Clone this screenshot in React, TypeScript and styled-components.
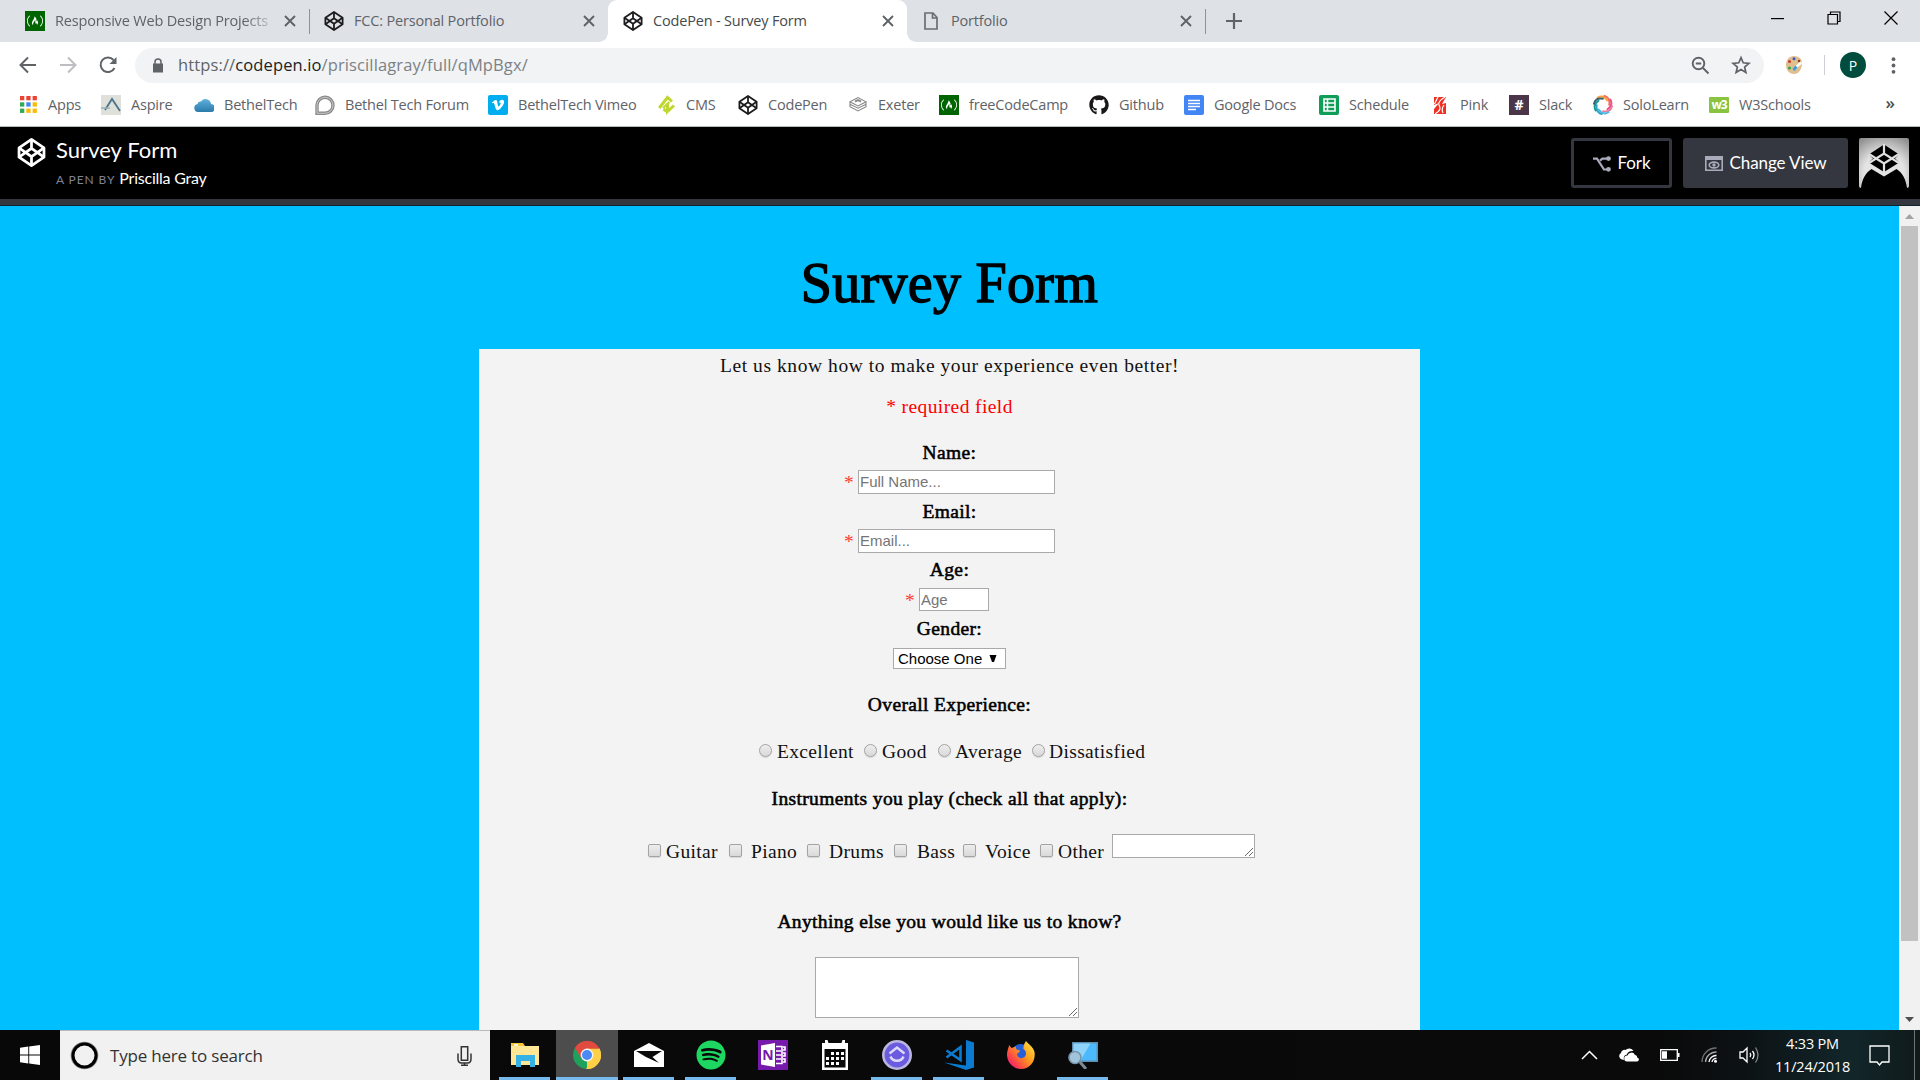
import React from "react";
import styled, { createGlobalStyle, css } from "styled-components";
import { FaGithub, FaSpotify, FaVimeoV } from "react-icons/fa";
import { SiFreecodecamp } from "react-icons/si";

const ui = '"Open Sans", "Noto Sans", sans-serif';
const serif = '"Liberation Serif", serif';
const lato = 'Lato, "Open Sans", sans-serif';
const arial = '"Liberation Sans", Arial, sans-serif';

const GlobalStyle = createGlobalStyle`
  html, body { margin: 0; padding: 0; overflow: hidden; }
  *, *::before, *::after { box-sizing: border-box; }
  svg { display: block; flex: none; }
`;

const Screen = styled.div`
  width: 1920px;
  height: 1080px;
  display: flex;
  flex-direction: column;
  overflow: hidden;
  background: #fff;
  font-family: ${ui};
`;

/* ---------- tab strip ---------- */

const TabStrip = styled.div`
  height: 42px;
  flex: none;
  display: flex;
  background: #dee1e6;
`;

const TabBox = styled.div<{ $width: number; $pad: number; $active?: boolean; $divider?: boolean }>`
  position: relative;
  width: ${(p) => p.$width}px;
  height: 42px;
  padding: 0 13px 0 ${(p) => p.$pad}px;
  display: flex;
  align-items: center;
  color: ${(p) => (p.$active ? "#45494d" : "#5f6368")};
  ${(p) =>
    p.$active &&
    css`
      background: #fff;
      border-radius: 9px 9px 0 0;
      &::before,
      &::after {
        content: "";
        position: absolute;
        bottom: 0;
        width: 9px;
        height: 9px;
      }
      &::before {
        left: -9px;
        background: radial-gradient(circle at 0 0, transparent 8.5px, #fff 9px);
      }
      &::after {
        right: -9px;
        background: radial-gradient(circle at 100% 0, transparent 8.5px, #fff 9px);
      }
    `}
  ${(p) =>
    p.$divider &&
    css`
      &::after {
        content: "";
        position: absolute;
        right: -1px;
        top: 9px;
        width: 1px;
        height: 25px;
        background: #8f9297;
      }
    `}
`;

const TabTitle = styled.span<{ $fade?: boolean }>`
  flex: 1;
  margin-left: 10px;
  margin-right: 14px;
  font-size: 14.5px;
  letter-spacing: -0.18px;
  line-height: 20px;
  padding-bottom: 1px;
  white-space: nowrap;
  overflow: hidden;
  ${(p) =>
    p.$fade &&
    css`
      -webkit-mask-image: linear-gradient(90deg, #000 88%, rgba(0, 0, 0, 0.25) 100%);
    `}
`;

const NewTab = styled.div`
  width: 58px;
  display: flex;
  align-items: center;
  justify-content: center;
`;

const WindowButtons = styled.div`
  margin-left: auto;
  margin-top: -6px;
  padding-right: 22px;
  display: flex;
  align-items: center;
  gap: 43px;
`;

/* ---------- address bar ---------- */

const Toolbar = styled.div`
  height: 45px;
  flex: none;
  display: flex;
  align-items: center;
  padding: 1px 0 0 18px;
`;

const NavButtons = styled.div`
  width: 117px;
  display: flex;
  gap: 20px;
`;

const AddressPill = styled.div`
  width: 1629px;
  height: 35px;
  border-radius: 18px;
  background: #f1f3f4;
  display: flex;
  align-items: center;
  padding: 0 13px 0 17px;
`;

const Url = styled.span`
  flex: 1;
  margin-left: 14px;
  padding-bottom: 1px;
  font-size: 16.5px;
  letter-spacing: 0.12px;
  line-height: 22px;
  color: #7d8185;
`;

const UrlScheme = styled.span`
  color: #5f6368;
`;
const UrlHost = styled.span`
  color: #202124;
`;

const PillActions = styled.div`
  display: flex;
  align-items: center;
  gap: 21px;
`;

const Extensions = styled.div`
  margin-left: 21px;
  display: flex;
  align-items: center;
`;

const Rule = styled.div`
  width: 1px;
  height: 20px;
  margin: 0 15px 0 21px;
  background: #cdd0d4;
`;

const Profile = styled.div`
  width: 26px;
  height: 26px;
  margin-right: 17px;
  border-radius: 50%;
  background: #004d40;
  color: #fff;
  display: flex;
  align-items: center;
  justify-content: center;
  font: 14px ${ui};
`;

/* ---------- bookmarks ---------- */

const BookmarkBar = styled.div`
  height: 40px;
  flex: none;
  display: flex;
  align-items: center;
  padding: 0 0 4px 18px;
  border-bottom: 1px solid #b6bcba;
`;

const BookmarkItem = styled.div<{ $width: number }>`
  width: ${(p) => p.$width}px;
  display: flex;
  align-items: center;
  gap: 10px;
  font-size: 14.5px;
  letter-spacing: -0.2px;
  line-height: 20px;
  white-space: nowrap;
  color: #5f6368;
`;

const IconSlot = styled.span`
  width: 20px;
  height: 20px;
  flex: none;
  display: flex;
  align-items: center;
  justify-content: center;
`;

const Tile = styled.span<{ $bg: string; $radius?: number }>`
  width: 20px;
  height: 20px;
  flex: none;
  border-radius: ${(p) => p.$radius ?? 0}px;
  background: ${(p) => p.$bg};
  color: #fff;
  display: flex;
  align-items: center;
  justify-content: center;
  font: bold 14px/20px ${ui};
  letter-spacing: 0;
`;

const MoreBookmarks = styled.span`
  margin-left: auto;
  margin-right: 25px;
  margin-top: -3px;
  font-size: 17px;
  font-weight: 600;
  line-height: 20px;
  color: #4a4d51;
`;

/* ---------- pen header ---------- */

const PenHeader = styled.header`
  height: 78px;
  flex: none;
  display: flex;
  margin-bottom: 1px;
  padding: 11px 11px 0 17px;
  background: #000;
  border-bottom: 6px solid #343740;
  box-shadow: 0 1px 0 #10242e;
  font-family: ${lato};
  color: #fff;
`;

const PenTitles = styled.div`
  flex: 1;
  margin: -1px 0 0 10px;
`;

const PenName = styled.h1`
  margin: 0;
  font-weight: 400;
  font-size: 22px;
  letter-spacing: 0.05px;
  line-height: 26px;
`;

const PenByline = styled.div`
  margin-top: 4px;
  font-size: 16px;
  line-height: 22px;
  letter-spacing: -0.23px;
`;

const ByLabel = styled.span`
  margin-right: 4px;
  font-size: 12px;
  letter-spacing: 0.9px;
  color: #7f8293;
`;

const HeaderButton = styled.button<{ $filled?: boolean; $width: number }>`
  width: ${(p) => p.$width}px;
  height: 50px;
  padding: 0 0 1px;
  display: flex;
  align-items: center;
  justify-content: center;
  gap: 7px;
  border: 3px solid #343740;
  border-radius: 3px;
  background: ${(p) => (p.$filled ? "#343740" : "#000")};
  color: #fff;
  font: 17px ${lato};
  letter-spacing: -0.1px;
  & > svg {
    margin-top: 2px;
  }
`;

const HeaderActions = styled.div`
  display: flex;
  gap: 11px;
`;

/* ---------- survey page ---------- */

const Viewport = styled.main`
  height: 824px;
  flex: none;
  display: flex;
  background: #00bfff;
`;

const Page = styled.div`
  width: 1899px;
  display: flex;
  flex-direction: column;
  align-items: center;
  font-family: ${serif};
  color: #000;
`;

const PageTitle = styled.h1`
  margin: 45px 0 0;
  height: 98px;
  font-weight: 400;
  font-size: 56px;
  letter-spacing: 0.3px;
  line-height: 64px;
  -webkit-text-stroke: 1.4px #000;
`;

const Card = styled.form`
  width: 941px;
  flex: 1;
  padding-top: 5px;
  background: #f3f3f3;
  display: flex;
  flex-direction: column;
  align-items: center;
`;

const Line = styled.p<{ $color?: string; $spacing?: number }>`
  margin: 0 0 17px;
  font-size: 19.5px;
  line-height: 24px;
  letter-spacing: ${(p) => p.$spacing ?? 0.4}px;
  color: ${(p) => p.$color ?? "#111"};
`;

const Heading = styled.h2<{ $top: number; $bottom: number }>`
  margin: ${(p) => p.$top}px 0 ${(p) => p.$bottom}px;
  font-weight: 400;
  font-size: 19.5px;
  line-height: 24px;
  letter-spacing: 0.36px;
  -webkit-text-stroke: 0.55px #000;
`;

const FieldRow = styled.div<{ $tail?: number }>`
  display: flex;
  padding-right: ${(p) => p.$tail ?? 0}px;
`;

const Star = styled.span`
  width: 14px;
  font-size: 19.5px;
  line-height: 25px;
  height: 23px;
  color: #ff3b30;
`;

const TextInput = styled.input<{ $width: number; $height: number }>`
  width: ${(p) => p.$width}px;
  height: ${(p) => p.$height}px;
  padding: 1px 1px 2px;
  border: 1px solid #a9a9a9;
  border-radius: 0;
  background: #fff;
  font: 15px ${arial};
  outline: none;
  &::placeholder {
    color: #757575;
  }
`;

const SelectBox = styled.div`
  width: 113px;
  height: 21px;
  padding: 0 8px 0 4px;
  display: flex;
  align-items: center;
  justify-content: space-between;
  border: 1px solid #a9a9a9;
  background: #fff;
  font: 15px/19px ${arial};
  white-space: nowrap;
`;

const OptionRow = styled.div<{ $left: number; $height: number }>`
  width: 100%;
  height: ${(p) => p.$height}px;
  padding-left: ${(p) => p.$left}px;
  display: flex;
  align-items: flex-end;
`;

const OptionBox = styled.label<{ $width: number; $gap: number }>`
  width: ${(p) => p.$width}px;
  display: flex;
  align-items: center;
  gap: ${(p) => p.$gap}px;
  font-size: 19.5px;
  line-height: 24px;
  letter-spacing: 0.35px;
  white-space: nowrap;
  color: #111;
`;

const Mark = styled.span<{ $round?: boolean }>`
  width: 13px;
  height: 13px;
  flex: none;
  margin-bottom: 3px;
  border: 1px solid #a3a3a3;
  border-radius: ${(p) => (p.$round ? "50%" : "2px")};
  background: linear-gradient(#ededed, #d9d9d9);
  box-shadow: 0 1px 1px rgba(0, 0, 0, 0.12);
`;

const AreaBox = styled.div<{ $width: number; $height: number }>`
  width: ${(p) => p.$width}px;
  height: ${(p) => p.$height}px;
  flex: none;
  align-self: flex-start;
  display: flex;
  align-items: flex-end;
  justify-content: flex-end;
  padding: 0 1px 1px 0;
  border: 1px solid #a9a9a9;
  background: #fff;
`;

const ScrollBar = styled.div`
  width: 21px;
  display: flex;
  flex-direction: column;
  align-items: center;
  background: #f1f1f1;
  padding: 8px 0;
`;

const Thumb = styled.div`
  width: 17px;
  height: 715px;
  margin: 7px 0 auto;
  background: #c1c1c1;
`;

/* ---------- taskbar ---------- */

const Taskbar = styled.footer`
  height: 50px;
  flex: none;
  display: flex;
  background: linear-gradient(90deg, #080808 0, #0a0a0a 1660px, #0c1113 1740px, #12262a 1850px, #101a1b 1920px);
  color: #fff;
`;

const Start = styled.div`
  width: 60px;
  display: flex;
  align-items: center;
  justify-content: center;
`;

const SearchBox = styled.div`
  width: 430px;
  margin-right: 4px;
  padding: 0 18px 0 10px;
  display: flex;
  align-items: center;
  background: #f1f1f1;
  border-top: 1px solid #b9b9b9;
`;

const SearchText = styled.span`
  flex: 1;
  margin-left: 11px;
  font-size: 17px;
  letter-spacing: -0.2px;
  color: #333;
`;

const AppCell = styled.div<{ $running?: boolean; $active?: boolean }>`
  position: relative;
  width: 62px;
  display: flex;
  align-items: center;
  justify-content: center;
  background: ${(p) => (p.$active ? "#4d4d4d" : "transparent")};
  &::after {
    content: "";
    display: ${(p) => (p.$running || p.$active ? "block" : "none")};
    position: absolute;
    bottom: 0;
    left: ${(p) => (p.$active ? 0 : 5)}px;
    right: ${(p) => (p.$active ? 0 : 6)}px;
    height: 3px;
    background: #76b9ed;
  }
`;

const Tray = styled.div`
  margin-left: auto;
  display: flex;
  align-items: center;
`;

const TrayIcons = styled.div`
  display: flex;
  align-items: center;
  gap: 21px;
`;

const Clock = styled.div`
  width: 101px;
  margin: 0 6px 0 2px;
  text-align: center;
  font-size: 14.5px;
  line-height: 23px;
  letter-spacing: -0.2px;
  padding-bottom: 1px;
`;

const ShowDesktop = styled.div`
  width: 6px;
  height: 50px;
  margin-left: 24px;
  border-left: 1px solid #6d7476;
`;

/* ---------- drawings ---------- */

const CodePenLogo = ({ size = 20, color = "#1c1c1e", stroke = 9 }: { size?: number; color?: string; stroke?: number }) => (
  <svg width={size} height={size} viewBox="0 0 100 100" fill="none" stroke={color} strokeWidth={stroke} strokeLinejoin="round">
    <path d="M50 5 93 34V66L50 95 7 66V34Z" />
    <path d="M50 5V36M50 64V95M7 34 50 64 93 34M7 66 50 36 93 66" />
  </svg>
);

const Cross = () => (
  <svg width="12" height="12" viewBox="0 0 12 12" stroke="#5f6368" strokeWidth="1.9">
    <path d="M1 1l10 10M11 1L1 11" />
  </svg>
);

const FreeCodeCamp = () => (
  <Tile $bg="#006400">
    <SiFreecodecamp size={16} />
  </Tile>
);

const PageGlyph = () => (
  <svg width="14" height="18" viewBox="0 0 14 18" fill="none" stroke="#6b6e73" strokeWidth="1.7">
    <path d="M1 1h8l4 4.500V17H1zM8.500 1v5H13" />
  </svg>
);

const AppsGlyph = () => {
  const colors = ["#ea4335", "#ea4335", "#ea4335", "#34a853", "#4285f4", "#fbbc05", "#34a853", "#fbbc05", "#fbbc05"];
  return (
    <svg width="17" height="17" viewBox="0 0 17 17">
      {colors.map((c, i) => (
        <rect key={i} x={(i % 3) * 6.3} y={Math.floor(i / 3) * 6.3} width="4.300" height="4.300" fill={c} />
      ))}
    </svg>
  );
};

const AspireGlyph = () => (
  <svg width="20" height="20" viewBox="0 0 20 20">
    <path fill="#dfe0da" d="M0 0h20v20H0z" />
    <path d="M4 15 11 4l8 12" fill="none" stroke="#49748f" strokeWidth="1.800" />
    <path d="M0 13h9" stroke="#9db0b8" strokeWidth="1.500" />
  </svg>
);

const BlueCloud = () => (
  <svg width="20" height="14" viewBox="0 0 20 14">
    <defs>
      <linearGradient id="cloudFill" x2="0" y2="1">
        <stop stopColor="#5fb0dc" />
        <stop offset="1" stopColor="#2b7bab" />
      </linearGradient>
    </defs>
    <path fill="url(#cloudFill)" d="M4 14a4 4 0 0 1-.5-7.900A3 3 0 0 1 7 3.500 5.500 5.500 0 0 1 17 6a4 4 0 0 1-.5 8z" />
  </svg>
);

const ForumGlyph = () => (
  <svg width="20" height="20" viewBox="0 0 20 20" fill="none">
    <path d="M2 18.300V10a8 8 0 1 1 8 8.300z" stroke="#8a8a8a" strokeWidth="3.400" />
    <path d="M2 18.300V10a8 8 0 1 1 8 8.300z" stroke="#cfcfcf" strokeWidth=".9" />
  </svg>
);

const CmsGlyph = () => (
  <svg width="17" height="20" viewBox="0 0 17 20" fill="none" stroke="#bfd730" strokeWidth="3">
    <path d="M1.200 13 9.500 2.500 14 6.500" />
    <path d="M11.500 7 5 13" strokeWidth="2.200" />
    <path d="M9.500 8.500v8l6.500-6M9.500 17l-4-3" />
  </svg>
);

const ExeterGlyph = () => (
  <svg width="18" height="15" viewBox="0 0 18 15" fill="none" stroke="#8b8b8b" strokeWidth="1.100">
    <path d="m1 4.800 8-4.200 8 4.200-8 4.200zM1 7.200l8 4 8-4M1 9.700l8 4.300 8-4.300M1 5v5M17 5v5" />
    <path d="m6 4.500 3-1.500 3 1.500" strokeWidth="2" />
  </svg>
);

const DocLines = () => (
  <svg width="12" height="12" viewBox="0 0 12 12" stroke="#fff" strokeWidth="1.500">
    <path d="M0 1.500h12M0 4.500h12M0 7.500h12M0 10.500h8" />
  </svg>
);

const SheetGlyph = () => (
  <svg width="13" height="14" viewBox="0 0 13 14" fill="none" stroke="#fff" strokeWidth="1.600">
    <path d="M1 1h11v12H1zM1 5h11M1 9h11M4.500 1v12" />
  </svg>
);

const PinkGlyph = () => (
  <svg width="14" height="20" viewBox="0 0 14 20">
    <path fill="#ee3124" d="M1 2h12L9 9l4-1v11H1v-5l5-6-5 2z" />
    <path d="M12 2C7 5 5 8 6 10s3 5-4 9M5 2 1.500 9M11 10q-3 4-1 8" stroke="#fff" strokeWidth="1.200" fill="none" />
  </svg>
);

const SoloLearnGlyph = () => {
  const colors = ["#f6a33b", "#f26f5a", "#ec4d87", "#f07a96", "#49b9e8", "#2aa7c9", "#149a8d", "#3c5f73"];
  return (
    <svg width="20" height="20" viewBox="-10 -10 20 20" fill="none" strokeWidth="1.900" strokeLinecap="round">
      {colors.map((c, i) => (
        <path key={c} d="M-5.500-7.300Q0-10.500 4.300-4.500" stroke={c} transform={`rotate(${i * 45})`} />
      ))}
    </svg>
  );
};

const W3Tile = styled(Tile)`
  height: 16px;
  font: bold 12px/14px ${ui};
  letter-spacing: -1px;
`;

const Palette = () => (
  <svg width="18" height="20" viewBox="0 0 18 20">
    <path fill="#e0bf8e" d="M9 1c5 0 8 3 8 7 0 6-3 11-8 11-5 0-8-4-8-9s3-9 8-9z" />
    <circle cx="9" cy="3.800" r="1.500" fill="#3f52c9" />
    <circle cx="4.500" cy="6.500" r="1.500" fill="#cf3a32" />
    <circle cx="4.500" cy="13" r="1.600" fill="#3aa648" />
    <circle cx="14" cy="6" r="1.300" fill="#8a3f22" />
    <path d="m16.500 7.500-6 5" stroke="#fff" strokeWidth="2.400" />
    <path d="m11.500 11.500-3 3.500" stroke="#3d9be0" strokeWidth="2.800" />
  </svg>
);

const ArrowGlyph = ({ color, flip }: { color: string; flip?: boolean }) => (
  <svg width="20" height="20" viewBox="0 0 20 20" fill="none" stroke={color} strokeWidth="2">
    <path d={flip ? "M2 10h15M10 2.500l7.500 7.500-7.500 7.500" : "M18 10H3M10 2.500 2.500 10l7.500 7.500"} />
  </svg>
);

const ReloadGlyph = () => (
  <svg width="20" height="20" viewBox="0 0 20 20">
    <path d="M16.500 13A7.300 7.300 0 1 1 15.500 5" fill="none" stroke="#5f6368" strokeWidth="2" />
    <path d="M18.500 2v7h-7z" fill="#5f6368" />
  </svg>
);

const LockGlyph = () => (
  <svg width="12" height="15" viewBox="0 0 12 15">
    <path fill="#5f6368" d="M1 5.500h10v9H1z" />
    <path d="M3 6V4a3 3 0 0 1 6 0v2" fill="none" stroke="#5f6368" strokeWidth="1.500" />
  </svg>
);

const ZoomOutGlyph = () => (
  <svg width="19" height="19" viewBox="0 0 19 19" fill="none" stroke="#5f6368" strokeWidth="1.900">
    <circle cx="7.500" cy="7.500" r="5.800" />
    <path d="m12 12 5.500 5.500M4.800 7.500h5.400" />
  </svg>
);

const StarGlyph = () => (
  <svg width="20" height="20" viewBox="0 0 20 20" fill="none" stroke="#5f6368" strokeWidth="1.700">
    <path d="m10 2.600 2.200 5.200 5.700.5-4.300 3.700 1.300 5.500L10 14.600l-4.900 2.900L6.400 12 2.100 8.300l5.700-.5z" />
  </svg>
);

const DotsGlyph = () => (
  <svg width="5" height="17" viewBox="0 0 5 17" fill="#5f6368">
    <circle cx="2.500" cy="2.200" r="1.900" />
    <circle cx="2.500" cy="8.500" r="1.900" />
    <circle cx="2.500" cy="14.800" r="1.900" />
  </svg>
);

const ForkGlyph = () => (
  <svg width="18" height="16" viewBox="0 0 18 16" fill="none" stroke="#a9abbb" strokeWidth="2.200">
    <path d="M0 2.600h4L11 13.500h4M7 4.500 9.500 2.600H15" />
    <circle cx="15.500" cy="2.600" r="1.300" fill="#a9abbb" />
    <circle cx="15.500" cy="13.300" r="1.300" fill="#a9abbb" />
  </svg>
);

const ViewGlyph = () => (
  <svg width="18" height="15" viewBox="0 0 18 15" fill="none" stroke="#a9abbb" strokeWidth="1.600">
    <path d="M.8.800h16.400v13.400H.8z" />
    <path d="M0 2h18" strokeWidth="4" />
    <ellipse cx="9" cy="9" rx="4.800" ry="2.900" />
    <circle cx="9" cy="9" r=".9" />
  </svg>
);

const PenAvatar = () => (
  <svg width="50" height="50" viewBox="0 0 50 50">
    <defs>
      <radialGradient id="avatarGlow" cy=".7" r=".8">
        <stop offset=".5" stopColor="#e4e4e4" />
        <stop offset="1" stopColor="#8f8f8f" />
      </radialGradient>
    </defs>
    <rect width="50" height="50" rx="2" fill="url(#avatarGlow)" />
    <path d="M2 50c1-8 4-15 10.500-19L25 38.500 37.500 31C44 35 47 42 48 50z" />
    <path d="M25 6.500 39.500 16v9L25 34 10.500 25v-9z" />
    <path d="M25 6v9.500M25 25.500V35M10 16l15 9.500L40 16M10 25l15-9.500L40 25" stroke="#e0e0e0" strokeWidth="2.200" fill="none" />
    <path d="M9.500 16.500 14 20.500l-4.500 4zM40.500 16.500 36 20.500l4.500 4z" fill="#e0e0e0" />
  </svg>
);

const ResizeGrip = () => (
  <svg width="9" height="9" viewBox="0 0 9 9" stroke="#6a6a6a" strokeWidth="1">
    <path d="M1 9l8-8M5 9l4-4" />
  </svg>
);

const WindowsLogo = () => (
  <svg width="20" height="20" viewBox="0 0 20 20" fill="#fff">
    <path d="M0 2.800 8.300 1.600v7.900H0zM9.200 1.500 20 0v9.500H9.200zM0 10.400h8.300v8L0 17.200zM9.200 10.400H20V20L9.200 18.500z" />
  </svg>
);

const Cortana = () => (
  <svg width="29" height="29" viewBox="0 0 29 29" fill="none">
    <circle cx="14.500" cy="14.500" r="12.500" stroke="#8a8a8a" strokeWidth="2.600" />
    <circle cx="14.500" cy="14.500" r="11.500" stroke="#000" strokeWidth="3" />
  </svg>
);

const Mic = () => (
  <svg width="15" height="20" viewBox="0 0 15 20" fill="none" stroke="#333" strokeWidth="1.500">
    <path d="M4.300.8h6.400v13.400H4.300z" />
    <path d="M1 7.500V13c0 2.500 1.500 4 3.500 4h6c2 0 3.500-1.500 3.500-4V7.500M7.500 17v2.500M4 19.200h7" />
  </svg>
);

const ExplorerIcon = () => (
  <svg width="28" height="24" viewBox="0 0 28 24">
    <path fill="#f9c53a" d="M0 0h12l2 3H0z" />
    <path fill="#ffe694" d="M0 3h28v19H0z" />
    <path fill="#fff" d="M3 1.200h4v1.600H3z" />
    <path fill="#35b1e6" d="M5 12h19v12h-5v-6h-9v6H5z" />
  </svg>
);

const ChromeIcon = () => (
  <svg width="28" height="28" viewBox="-14 -14 28 28">
    <path fill="#e04a3f" d="M0 0-12.100-7A14 14 0 0 1 12.100-7z" />
    <path fill="#ffd045" d="M0 0 12.100-7A14 14 0 0 1 0 14z" />
    <path fill="#1fa15d" d="M0 0 0 14A14 14 0 0 1-12.100-7z" />
    <path fill="#e04a3f" d="M-12.100-7-5.500 3.500 0-6.300H12.500A14 14 0 0 0-12.100-7z" />
    <path fill="#ffd045" d="M12.500-6.300H0L5.600 3-1 14A14 14 0 0 0 12.500-6.300z" />
    <circle r="6.400" fill="#f4f4f4" />
    <circle r="5" fill="#4a8af4" />
  </svg>
);

const MailIcon = () => (
  <svg width="30" height="24" viewBox="0 0 30 24">
    <path fill="#fff" d="M0 8 15 0l15 8v16H0z" />
    <path fill="#0a0a0a" d="M2 8h26l-9.500 6 6.500 6L12 14z" />
  </svg>
);

const SpotifyBadge = styled.span`
  width: 30px;
  height: 30px;
  display: flex;
  align-items: center;
  justify-content: center;
  color: #1ed760;
`;

const OneNoteTile = styled.span`
  width: 30px;
  height: 30px;
  padding-left: 3px;
  display: flex;
  align-items: center;
  background: #7719aa;
`;

const OneNoteLetter = styled.span`
  width: 14px;
  height: 24px;
  background: #fff;
  color: #7719aa;
  font: bold 14px/24px ${ui};
  text-align: center;
  clip-path: polygon(0 10%, 100% 0, 100% 100%, 0 90%);
`;

const OneNoteIcon = () => (
  <OneNoteTile>
    <OneNoteLetter>N</OneNoteLetter>
    <svg width="11" height="20" viewBox="0 0 11 20" fill="none" stroke="#fff" strokeWidth="1.600">
      <path d="M1 1.500h6v17H1M1 6h5M1 10h5M1 14h5M8 2h2v3H8M8 8h2v3H8M8 14h2v3H8" />
    </svg>
  </OneNoteTile>
);

const CalendarIcon = () => (
  <svg width="26" height="30" viewBox="0 0 26 30">
    <path fill="#fff" d="M0 3h3V0h2.500l1 3h13l1-3H23v3h3v27H0z" />
    <path fill="#0a0a0a" d="M2.500 9h21v18.500h-21z" />
    <path
      fill="#fff"
      d="M9 12h3v3H9zM14 12h3v3h-3zM19 12h3v3h-3zM4 17h3v3H4zM9 17h3v3H9zM14 17h3v3h-3zM19 17h3v3h-3zM4 22h3v3H4zM9 22h3v3H9zM14 22h3v3h-3z"
    />
  </svg>
);

const PurpleBadge = () => (
  <svg width="30" height="30" viewBox="0 0 30 30" fill="none">
    <circle cx="15" cy="15" r="13.700" fill="#6a5be0" stroke="#bab6de" strokeWidth="2.600" />
    <path d="M7.500 13.500 15 7.500l7.500 6" stroke="#dcd9f7" strokeWidth="2.400" />
    <path d="M8.500 16.500a6.800 6 0 0 0 13 0" stroke="#dcd9f7" strokeWidth="2.400" />
  </svg>
);

const CodeIcon = () => (
  <svg width="30" height="30" viewBox="0 0 30 30">
    <path fill="#0a7bd0" d="M22 0l8 2.500v25L22 30 0 22.500l22 3z" />
    <path fill="none" stroke="#0a7bd0" strokeWidth="2.600" d="M2.500 10.500 16.500 20V7L2.500 17.500" />
  </svg>
);

const FirefoxIcon = () => (
  <svg width="28" height="28" viewBox="0 0 28 28">
    <defs>
      <linearGradient id="fox" x1="1" x2="0" y2=".9">
        <stop stopColor="#fff04a" />
        <stop offset=".45" stopColor="#ff9a1c" />
        <stop offset=".8" stopColor="#ff3b4e" />
        <stop offset="1" stopColor="#e01590" />
      </linearGradient>
    </defs>
    <circle cx="14" cy="13" r="10" fill="#2560d8" />
    <path
      fill="url(#fox)"
      d="M2 4l2.500 3L9 5.500C8.500 8 10 9 13 9.500c0 2-3 2.500-3 4 1 4 5 4.500 7.500 2.500 3-3 1-7-1-8-.5-4 2-7 2.500-8C21 3 26 5 27.500 11 29 20 23 28 14 28S-2 19 .5 10C1 7.500 2 6 2 4z"
    />
  </svg>
);

const ScreenSearchIcon = () => (
  <svg width="30" height="28" viewBox="0 0 30 28">
    <path fill="#5f8fb0" d="M4 1h26v20H4z" />
    <path fill="#4bb9fb" d="M5.500 2.500h23v17h-23z" />
    <path fill="#8fd3fb" d="M5.500 2.500h17l-10 17h-7z" />
    <path d="m12 21 6 7" stroke="#7b8a96" strokeWidth="3" />
    <circle cx="7" cy="16.500" r="6" fill="#9fc4dc" stroke="#7b95a8" strokeWidth="1.600" />
  </svg>
);

const ChevronUp = () => (
  <svg width="17" height="10" viewBox="0 0 17 10" fill="none" stroke="#fff" strokeWidth="1.500">
    <path d="m1 9 7.500-7.500L16 9" />
  </svg>
);

const OneDrive = () => (
  <svg width="20" height="14" viewBox="0 0 20 14">
    <path fill="#fff" d="M3 11.500A3.500 3.500 0 0 1 2 5 3.500 3.500 0 0 1 6.500 2 5 5 0 0 1 14.500 3C10 3 8.500 4.500 8 6.500 5 7 4.300 9.500 5 12z" />
    <path fill="#fff" d="M8 13.500a3 3 0 0 1 .5-6A4 4 0 0 1 16 7a2 2 0 0 1 2 2.500c2.500.5 2.500 3.500 0 4z" />
  </svg>
);

const Battery = () => (
  <svg width="20" height="12" viewBox="0 0 20 12">
    <path d="M.7.700h16.600v10.600H.7z" fill="none" stroke="#fff" strokeWidth="1.300" />
    <path fill="#fff" d="M2 2.300h5v7.400H2zM18 4h1.500v4H18z" />
  </svg>
);

const Wifi = () => (
  <svg width="17" height="16" viewBox="0 0 17 16" fill="none" strokeWidth="1.300">
    <path d="M1 15A14 14 0 0 1 15.500 1" stroke="#6f7272" />
    <path d="M4.500 15A10.500 10.500 0 0 1 15.500 5" stroke="#aaa" />
    <path d="M8 15a7 7 0 0 1 7.500-6.500M11 15a4 4 0 0 1 4.500-3.500" stroke="#fff" />
    <circle cx="14.500" cy="14.300" r="1.500" fill="#fff" />
  </svg>
);

const Volume = () => (
  <svg width="21" height="18" viewBox="0 0 21 18" fill="none" stroke="#fff" strokeWidth="1.300">
    <path d="M1 6v6h3l4 4V2L4 6zM11 7q1.500 2 0 4M13.500 5q3 4 0 8" />
    <path d="M16.500 1.500q5 7.500 0 15" stroke="#888" />
  </svg>
);

const Notification = () => (
  <svg width="21" height="21" viewBox="0 0 21 21" fill="none" stroke="#fff" strokeWidth="1.300">
    <path d="M1 1h19v16h-7l-2.500 3L8 17H1z" />
  </svg>
);

/* ---------- data ---------- */

const bookmarks: { label: string; width: number; icon: React.ReactNode }[] = [
  { label: "Apps", width: 83, icon: <AppsGlyph /> },
  { label: "Aspire", width: 93, icon: <AspireGlyph /> },
  { label: "BethelTech", width: 121, icon: <BlueCloud /> },
  { label: "Bethel Tech Forum", width: 173, icon: <ForumGlyph /> },
  { label: "BethelTech Vimeo", width: 168, icon: <Tile $bg="#00adef" $radius={2}><FaVimeoV size={14} /></Tile> },
  { label: "CMS", width: 82, icon: <CmsGlyph /> },
  { label: "CodePen", width: 110, icon: <CodePenLogo /> },
  { label: "Exeter", width: 91, icon: <ExeterGlyph /> },
  { label: "freeCodeCamp", width: 150, icon: <FreeCodeCamp /> },
  { label: "Github", width: 95, icon: <FaGithub size={20} color="#191717" /> },
  { label: "Google Docs", width: 135, icon: <Tile $bg="#4285f4" $radius={2}><DocLines /></Tile> },
  { label: "Schedule", width: 111, icon: <Tile $bg="#0f9d58" $radius={2}><SheetGlyph /></Tile> },
  { label: "Pink", width: 79, icon: <PinkGlyph /> },
  { label: "Slack", width: 84, icon: <Tile $bg="#4a3549">#</Tile> },
  { label: "SoloLearn", width: 116, icon: <SoloLearnGlyph /> },
  { label: "W3Schools", width: 120, icon: <W3Tile $bg="#8ac340" $radius={1}>w3</W3Tile> },
];

const ratings = [
  { label: "Excellent", width: 105, gap: 5 },
  { label: "Good", width: 74, gap: 5 },
  { label: "Average", width: 94, gap: 4 },
  { label: "Dissatisfied", width: 120, gap: 4 },
];

const instruments = [
  { label: "Guitar", width: 81, gap: 5 },
  { label: "Piano", width: 78, gap: 9 },
  { label: "Drums", width: 87, gap: 9 },
  { label: "Bass", width: 69, gap: 10 },
  { label: "Voice", width: 77, gap: 9 },
  { label: "Other", width: 72, gap: 5 },
];

const taskApps: { id: string; icon: React.ReactNode; running?: boolean; active?: boolean }[] = [
  { id: "explorer", icon: <ExplorerIcon />, running: true },
  { id: "chrome", icon: <ChromeIcon />, active: true },
  { id: "mail", icon: <MailIcon />, running: true },
  { id: "spotify", icon: <SpotifyBadge><FaSpotify size={30} /></SpotifyBadge>, running: true },
  { id: "onenote", icon: <OneNoteIcon /> },
  { id: "calendar", icon: <CalendarIcon /> },
  { id: "purple", icon: <PurpleBadge />, running: true },
  { id: "code", icon: <CodeIcon />, running: true },
  { id: "firefox", icon: <FirefoxIcon /> },
  { id: "screen", icon: <ScreenSearchIcon />, running: true },
];

export default function App() {
  return (
    <Screen>
      <GlobalStyle />
      <TabStrip>
        <TabBox $width={309} $pad={25} $divider>
          <FreeCodeCamp />
          <TabTitle $fade>Responsive Web Design Projects</TabTitle>
          <Cross />
        </TabBox>
        <TabBox $width={299} $pad={15}>
          <CodePenLogo />
          <TabTitle>FCC: Personal Portfolio</TabTitle>
          <Cross />
        </TabBox>
        <TabBox $width={299} $pad={15} $active>
          <CodePenLogo />
          <TabTitle>CodePen - Survey Form</TabTitle>
          <Cross />
        </TabBox>
        <TabBox $width={298} $pad={14} $divider>
          <IconSlot>
            <PageGlyph />
          </IconSlot>
          <TabTitle>Portfolio</TabTitle>
          <Cross />
        </TabBox>
        <NewTab>
          <svg width="16" height="16" viewBox="0 0 16 16" stroke="#5f6368" strokeWidth="2.200">
            <path d="M8 0v16M0 8h16" />
          </svg>
        </NewTab>
        <WindowButtons>
          <svg width="13" height="13" viewBox="0 0 13 13">
            <path d="M0 6h13v1.200H0z" />
          </svg>
          <svg width="14" height="14" viewBox="0 0 14 14" fill="none" stroke="#000" strokeWidth="1.200">
            <path d="M1 3.500h9.500V13H1zM3.500 3V1H13v9.500h-2" />
          </svg>
          <svg width="14" height="14" viewBox="0 0 14 14" stroke="#000" strokeWidth="1.200">
            <path d="M.5.500l13 13M13.500.5l-13 13" />
          </svg>
        </WindowButtons>
      </TabStrip>

      <Toolbar>
        <NavButtons>
          <ArrowGlyph color="#5f6368" />
          <ArrowGlyph color="#bcbec1" flip />
          <ReloadGlyph />
        </NavButtons>
        <AddressPill>
          <LockGlyph />
          <Url>
            <UrlScheme>https://</UrlScheme>
            <UrlHost>codepen.io</UrlHost>/priscillagray/full/qMpBgx/
          </Url>
          <PillActions>
            <ZoomOutGlyph />
            <StarGlyph />
          </PillActions>
        </AddressPill>
        <Extensions>
          <Palette />
          <Rule />
          <Profile>P</Profile>
        </Extensions>
        <IconSlot>
          <DotsGlyph />
        </IconSlot>
      </Toolbar>

      <BookmarkBar>
        {bookmarks.map((b) => (
          <BookmarkItem key={b.label} $width={b.width}>
            <IconSlot>{b.icon}</IconSlot>
            {b.label}
          </BookmarkItem>
        ))}
        <MoreBookmarks>»</MoreBookmarks>
      </BookmarkBar>

      <PenHeader>
        <CodePenLogo size={29} color="#fff" stroke={9.5} />
        <PenTitles>
          <PenName>Survey Form</PenName>
          <PenByline>
            <ByLabel>A PEN BY</ByLabel>
            Priscilla Gray
          </PenByline>
        </PenTitles>
        <HeaderActions>
          <HeaderButton $width={101}>
            <ForkGlyph />
            Fork
          </HeaderButton>
          <HeaderButton $width={165} $filled>
            <ViewGlyph />
            Change View
          </HeaderButton>
          <PenAvatar />
        </HeaderActions>
      </PenHeader>

      <Viewport>
        <Page>
          <PageTitle>Survey Form</PageTitle>
          <Card>
            <Line $spacing={0.57}>Let us know how to make your experience even better!</Line>
            <Line $color="#ff0000">* required field</Line>
            <Heading $top={5} $bottom={5}>Name:</Heading>
            <FieldRow>
              <Star>*</Star>
              <TextInput $width={197} $height={24} placeholder="Full Name..." />
            </FieldRow>
            <Heading $top={6} $bottom={5}>Email:</Heading>
            <FieldRow>
              <Star>*</Star>
              <TextInput $width={197} $height={24} placeholder="Email..." />
            </FieldRow>
            <Heading $top={5} $bottom={6}>Age:</Heading>
            <FieldRow $tail={5}>
              <Star>*</Star>
              <TextInput $width={70} $height={23} placeholder="Age" />
            </FieldRow>
            <Heading $top={6} $bottom={7}>Gender:</Heading>
            <SelectBox>
              Choose One
              <svg width="8" height="8" viewBox="0 0 8 8">
                <path d="M.5 0h7L5 7H3z" />
              </svg>
            </SelectBox>
            <Heading $top={24} $bottom={23}>Overall Experience:</Heading>
            <OptionRow $left={280} $height={24}>
              {ratings.map((r) => (
                <OptionBox key={r.label} $width={r.width} $gap={r.gap}>
                  <Mark $round />
                  {r.label}
                </OptionBox>
              ))}
            </OptionRow>
            <Heading $top={23} $bottom={23}>Instruments you play (check all that apply):</Heading>
            <OptionRow $left={169} $height={30}>
              {instruments.map((i) => (
                <OptionBox key={i.label} $width={i.width} $gap={i.gap}>
                  <Mark />
                  {i.label}
                </OptionBox>
              ))}
              <AreaBox $width={143} $height={24}>
                <ResizeGrip />
              </AreaBox>
            </OptionRow>
            <Heading $top={46} $bottom={23}>Anything else you would like us to know?</Heading>
            <FieldRow $tail={5}>
              <AreaBox $width={264} $height={61}>
                <ResizeGrip />
              </AreaBox>
            </FieldRow>
          </Card>
        </Page>
        <ScrollBar>
          <svg width="9" height="5" viewBox="0 0 9 5">
            <path fill="#a3a3a3" d="M0 5 4.500 0 9 5z" />
          </svg>
          <Thumb />
          <svg width="9" height="5" viewBox="0 0 9 5">
            <path fill="#505050" d="M0 0h9L4.500 5z" />
          </svg>
        </ScrollBar>
      </Viewport>

      <Taskbar>
        <Start>
          <WindowsLogo />
        </Start>
        <SearchBox>
          <Cortana />
          <SearchText>Type here to search</SearchText>
          <Mic />
        </SearchBox>
        {taskApps.map((a) => (
          <AppCell key={a.id} $running={a.running} $active={a.active}>
            {a.icon}
          </AppCell>
        ))}
        <Tray>
          <TrayIcons>
            <ChevronUp />
            <OneDrive />
            <Battery />
            <Wifi />
            <Volume />
          </TrayIcons>
          <Clock>
            4:33 PM
            <br />
            11/24/2018
          </Clock>
          <Notification />
          <ShowDesktop />
        </Tray>
      </Taskbar>
    </Screen>
  );
}
